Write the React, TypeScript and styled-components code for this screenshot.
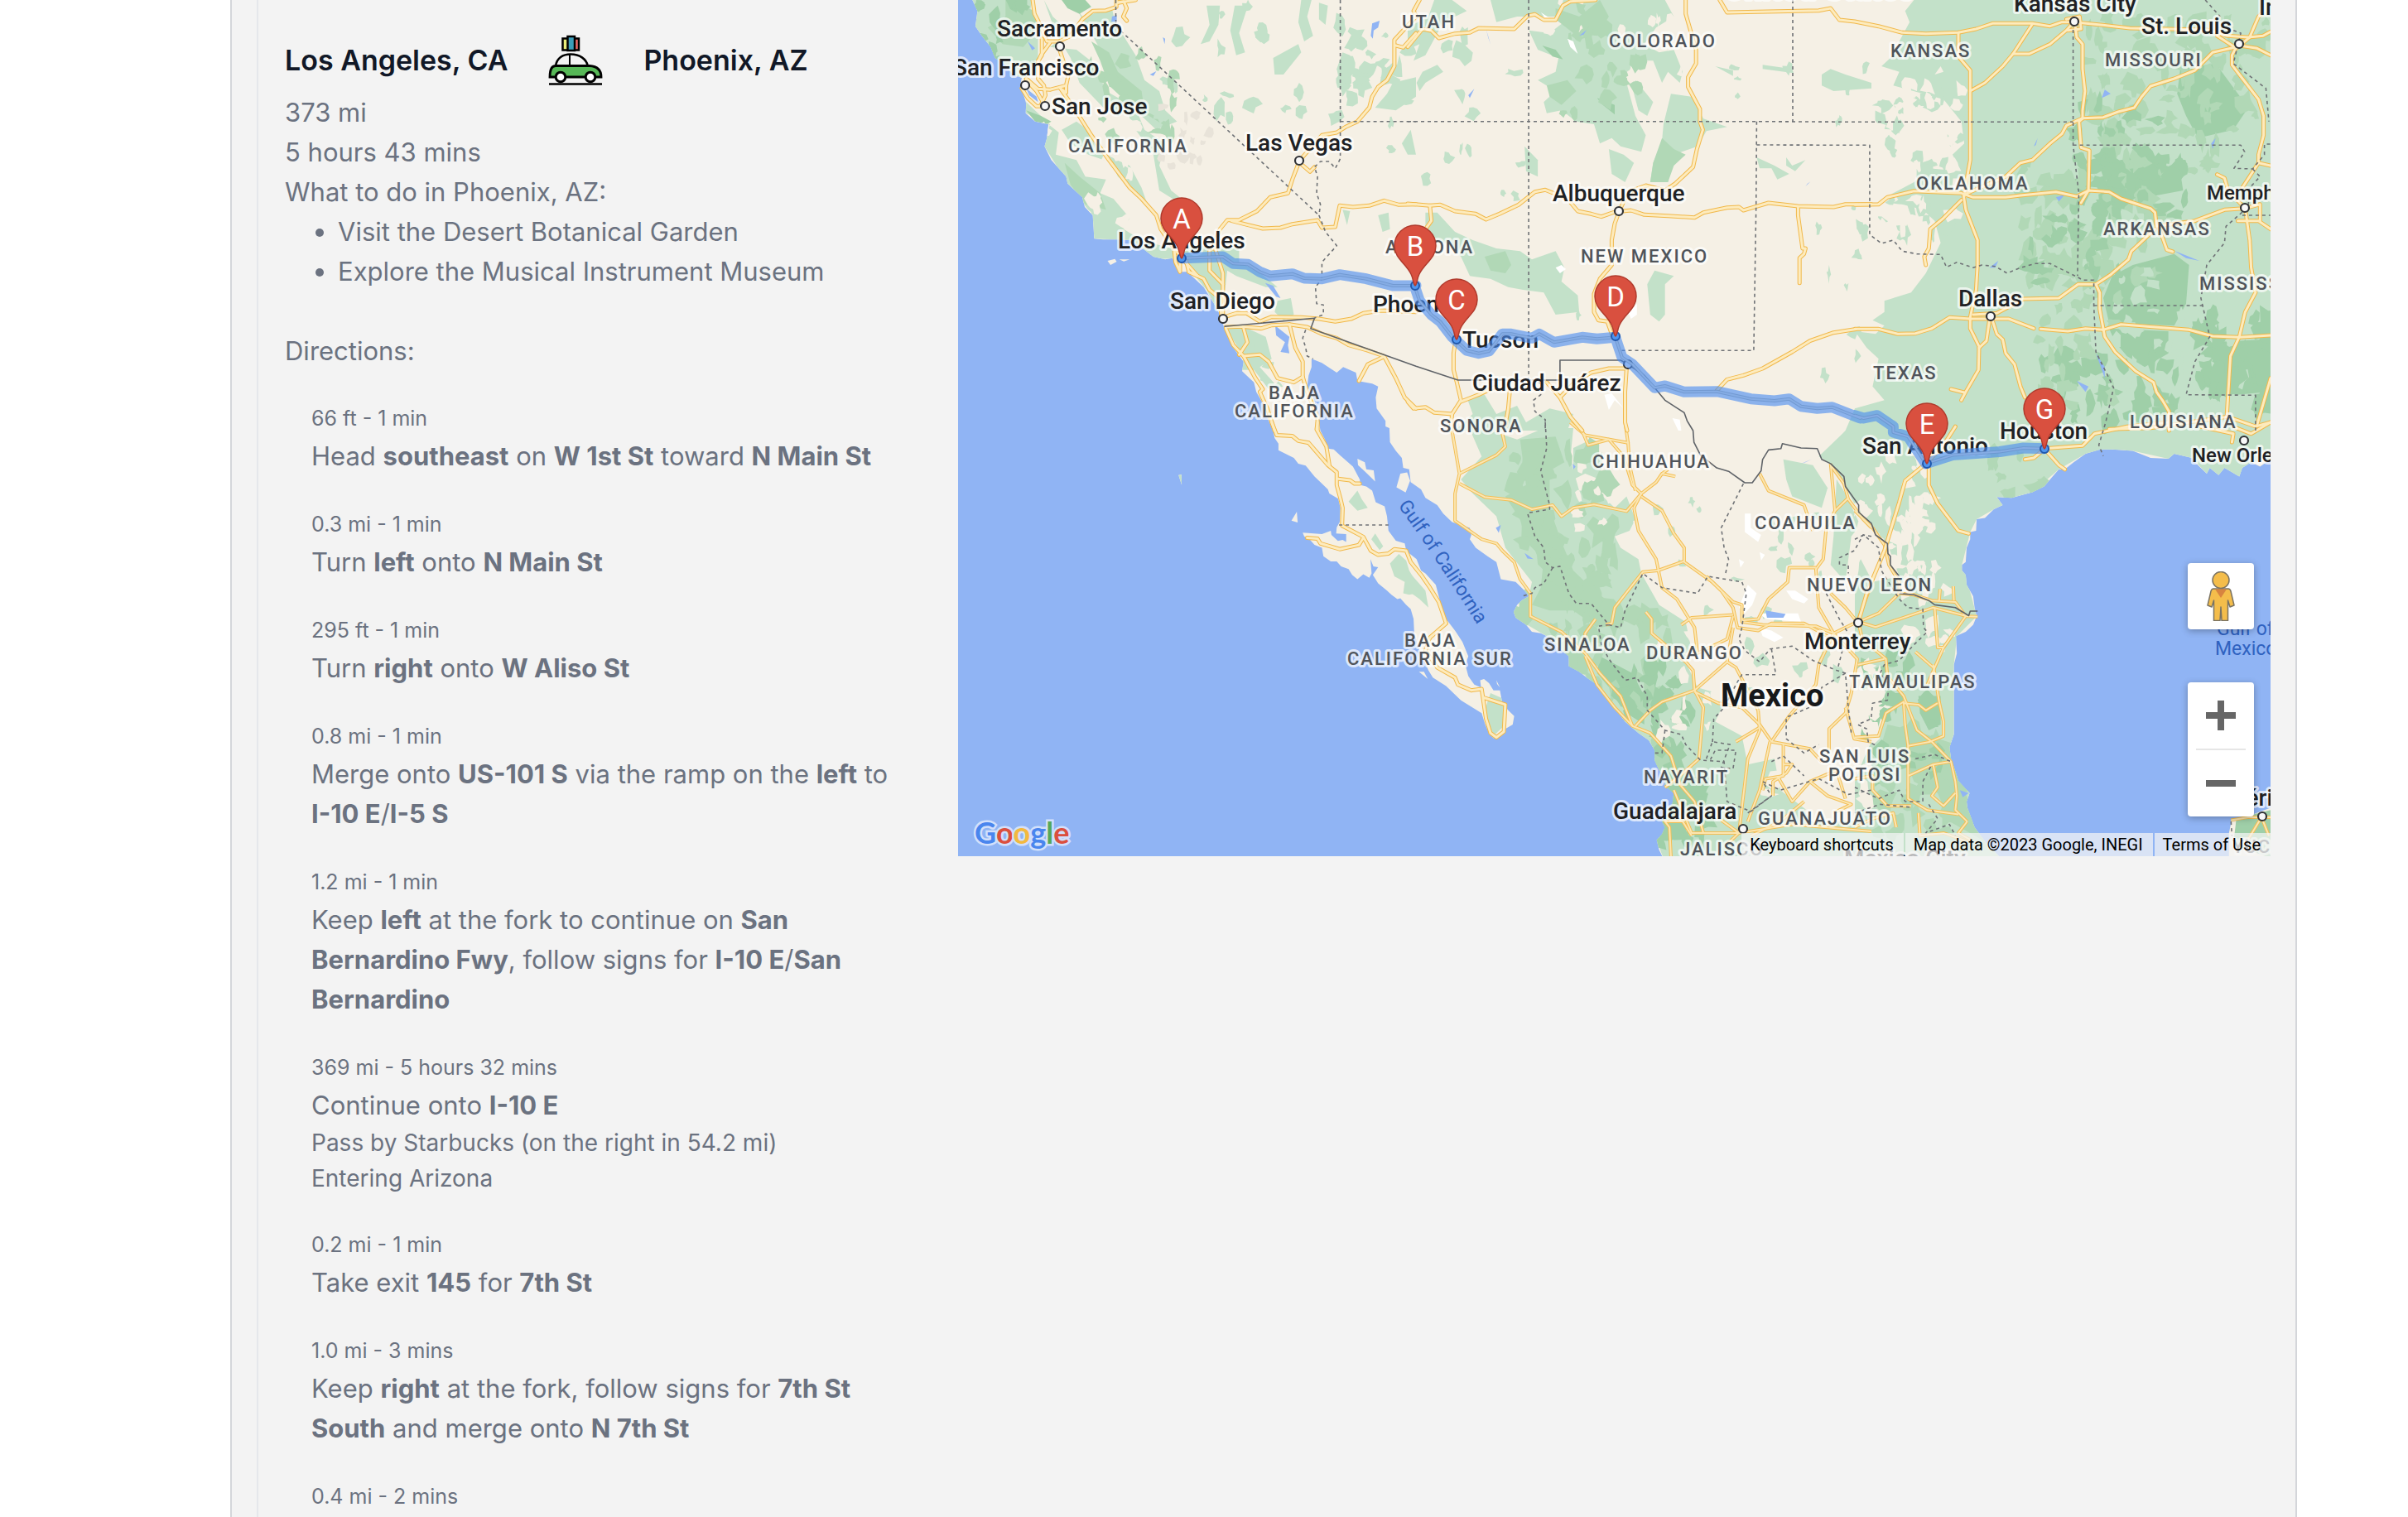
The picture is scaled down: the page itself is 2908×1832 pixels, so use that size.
import React from 'react';
import styled, { createGlobalStyle } from 'styled-components';

/* ---------- page styles ---------- */

const GlobalStyle = createGlobalStyle`
  *, *::before, *::after { box-sizing: border-box; }
  body {
    margin: 0;
    background: #ffffff;
    color: #6b7280;
    font-family: Inter, "Liberation Sans", sans-serif;
    font-size: 31px;
    line-height: 48px;
  }
  h2, p, ul, ol { margin: 0; padding: 0; }
`;

const Panel = styled.main`
  display: grid;
  grid-template-columns: minmax(0, 815fr) minmax(0, 1585fr);
  column-gap: 32px;
  align-items: start;
  min-height: 100vh;
  margin: 0 134px 0 278px;
  padding: 0 30px;
  border: solid #d4d6da;
  border-width: 0 2px;
  background: #f3f3f3;
`;

const Itinerary = styled.section`
  min-height: 100vh;
  padding: 34px 32px 0;
  border-left: 2px solid #e5e7eb;
`;

const LegHeader = styled.header`
  display: flex;
  align-items: center;
  gap: 48px;
  height: 78px;
`;

const City = styled.h2`
  color: #111827;
  font-size: 34px;
  font-weight: 600;
  line-height: 56px;
`;

const Activities = styled.ul`
  padding-left: 64px;
  margin-bottom: 48px;
`;

const Steps = styled.ol`
  display: flex;
  flex-direction: column;
  gap: 36px;
  padding: 35px 0 0 32px;
  list-style: none;
`;

const Meta = styled.p`
  font-size: 25px;
  line-height: 44px;
`;

const Note = styled.p`
  font-size: 28px;
  line-height: 43px;
`;

const MapFrame = styled.section`
  position: relative;
  overflow: hidden;
  background: #90b4f4;
  font-family: Roboto, "Liberation Sans", sans-serif;
`;

const MapDrawing = styled.svg`
  display: block;
  width: 100%;
  height: auto;
`;

const Controls = styled.div`
  position: absolute;
  right: 20px;
  bottom: 48px;
  display: flex;
  flex-direction: column;
  gap: 64px;
`;

const ControlCard = styled.div`
  display: flex;
  flex-direction: column;
  align-items: center;
  width: 80px;
  border-radius: 4px;
  background: #ffffff;
  box-shadow: 0 2px 8px rgba(0, 0, 0, 0.3);
`;

const ControlButton = styled.button`
  display: flex;
  align-items: center;
  justify-content: center;
  width: 80px;
  height: 80px;
  padding: 0;
  border: 0;
  background: transparent;
`;

const Divider = styled.div`
  width: 60px;
  height: 2px;
  background: #e6e6e6;
`;

const LogoLink = styled.a`
  position: absolute;
  left: 20px;
  bottom: 7px;
  font-family: Lato, sans-serif;
  font-size: 36px;
  font-weight: 700;
  line-height: 44px;
  text-decoration: none;
  paint-order: stroke;
  -webkit-text-stroke: 5px #d2e0fb;
`;

const Letter = styled.span<{ $color: string }>`
  color: ${(p) => p.$color};
`;

const Attribution = styled.footer`
  position: absolute;
  right: 0;
  bottom: 0;
  display: flex;
  gap: 2px;
  color: #000000;
  font-size: 20px;
  line-height: 28px;

  > * {
    padding: 0 12px 0 10px;
    border: 0;
    background: rgba(245, 245, 245, 0.72);
    color: inherit;
    font: inherit;
    text-decoration: none;
    white-space: nowrap;
  }
`;

/* ---------- directions ---------- */

type Step = { meta: string; text: React.ReactNode; notes?: string[] };

const steps: Step[] = [
  { meta: '66 ft - 1 min', text: <>Head <b>southeast</b> on <b>W 1st St</b> toward <b>N Main St</b></> },
  { meta: '0.3 mi - 1 min', text: <>Turn <b>left</b> onto <b>N Main St</b></> },
  { meta: '295 ft - 1 min', text: <>Turn <b>right</b> onto <b>W Aliso St</b></> },
  { meta: '0.8 mi - 1 min', text: <>Merge onto <b>US-101 S</b> via the ramp on the <b>left</b> to <b>I-10 E</b>/<b>I-5 S</b></> },
  { meta: '1.2 mi - 1 min', text: <>Keep <b>left</b> at the fork to continue on <b>San Bernardino Fwy</b>, follow signs for <b>I-10 E</b>/<b>San Bernardino</b></> },
  { meta: '369 mi - 5 hours 32 mins', text: <>Continue onto <b>I-10 E</b></>, notes: ['Pass by Starbucks (on the right in 54.2 mi)', 'Entering Arizona'] },
  { meta: '0.2 mi - 1 min', text: <>Take exit <b>145</b> for <b>7th St</b></> },
  { meta: '1.0 mi - 3 mins', text: <>Keep <b>right</b> at the fork, follow signs for <b>7th St South</b> and merge onto <b>N 7th St</b></> },
  { meta: '0.4 mi - 2 mins', text: null },
];

const CarIcon = () => (
  <svg width="68" height="62" viewBox="-1 0 68 62" fill="none" stroke="#000" strokeWidth="3" aria-hidden="true">
    <rect x="17.500" y="4.500" width="7" height="14" fill="#e9ee7a" strokeWidth="2.500" />
    <rect x="30" y="4.500" width="7" height="14" fill="#ee6a68" strokeWidth="2.500" />
    <rect x="23.500" y="2" width="8.500" height="17" fill="#3c9db8" strokeWidth="2.500" />
    <path d="M9 38C10 28 18 23.500 27 23.500C38 23.500 46 29 48 38Z" fill="#f3f3f3" strokeWidth="2.600" />
    <path d="M26 24V38" strokeWidth="2" />
    <path d="M2 51C2 43 4 37.500 9 37.500H50C59 38 64 42 64 51Z" fill="#57b857" strokeWidth="2.800" />
    <circle cx="15" cy="51" r="5.800" fill="#fff" />
    <circle cx="51" cy="51" r="5.800" fill="#fff" />
    <path d="M1 59.500H65" strokeWidth="2.400" />
  </svg>
);

/* ---------- map geometry ---------- */

// Every tile has its own origin and scale; traces are written in tile units.
type TileId = 'A' | 'B' | 'C' | 'D' | 'E' | 'F';
const tiles: Record<TileId, [number, number, number, number]> = {
  A: [1150, 0, 2.8, 3],
  B: [1700, 0, 2.8, 3],
  C: [2240, 0, 2.8, 3],
  D: [1150, 510, 2.8, 2.904],
  E: [1700, 510, 2.8, 2.904],
  F: [2240, 510, 2.8, 2.904],
};

// "A 10,20 30,40 B 0,5" becomes a list of world points.
const pts = (trace: string): string => {
  let tile = tiles.A;
  const out: string[] = [];
  trace.trim().split(/\s+/).forEach((t) => {
    if (t in tiles) {
      tile = tiles[t as TileId];
      return;
    }
    const [x, y] = t.split(',').map(Number);
    out.push(`${(tile[0] + x / tile[2]).toFixed(1)},${(tile[1] + y / tile[3]).toFixed(1)}`);
  });
  return out.join(' ');
};

const land = pts(`A 68,0 85,40 78,95 100,130 130,170 145,210 180,235 205,270 235,282 230,310 240,340 250,375 248,410 280,440 325,450 320,500 312,530 335,580 385,640 390,665 440,715 448,750 475,780 480,865 510,868 570,868 600,870 650,905 680,930 720,940 745,935 765,985 795,985 850,1040 885,1100 905,1140 920,1190 950,1260 985,1310 980,1345 1020,1385 1028,1420 1050,1460 1060,1500 1085,1560
 D 1090,55 1103,75 1103,98 1155,125 1170,145 1195,152 1225,190 1245,210 1270,235 1275,250 1305,268 1312,300 1310,350 1300,368 1298,390 1332,392 1332,420 1320,412 1304,416 1282,395 1280,380 1250,392 1185,387 1190,400 1210,412 1225,430 1250,440 1255,470 1280,488 1300,488 1315,505 1340,515 1352,535 1370,550 1390,533 1410,545 1418,530 1414,480 1424,505 1440,508 1422,535 1440,565 1470,590 1485,605 1505,620 1515,617 1535,640 1550,655 1560,690 1562,740
 E 40,800 70,870 85,895 130,925 180,975 250,1020 262,1060 275,1090 290,1108 320,1095 330,1075 355,1060 360,1030 340,1010 320,985 312,940 290,940 275,915 258,900 245,905 248,930 225,920 205,890 195,850 205,820 185,770 160,730 130,690 115,650 100,590 95,570 60,530 45,520 30,480 0,455
 D 1535,450 1530,425 1500,415 1475,380 1470,330 1462,295 1432,280 1420,240 1400,225 1380,220 1378,200 1355,155 1310,115 1290,95 1270,92 1260,60 1245,30 1240,0
 A 1235,1520 1225,1450 1200,1400 1205,1360 1215,1330 1215,1300 1250,1315 1300,1350 1322,1330 1365,1350 1370,1380 1420,1390 1440,1400 1432,1440 1435,1480 1465,1525 1465,1545
 D 1478,20 1480,70 1500,100 1520,125 1525,160 1545,165 1550,210
 E 45,235 60,265 100,290 120,320 150,350 210,370 215,395 210,410 230,440 270,470 300,490 315,550 365,560 395,590 410,610 385,625 370,640 358,665 365,685 400,710 420,735 450,740 470,750 510,790 545,820 545,855 580,875 605,895 640,920 670,955 700,1000 735,1050 780,1090 815,1115 835,1150 835,1185 850,1220 870,1245 870,1275 900,1300 895,1340 880,1360 860,1400 870,1420 860,1445 842,1465 850,1500 865,1530
 F 495,1530 440,1470 405,1420 380,1350 378,1330 388,1300 350,1258 345,1240 325,1180 320,1140 335,1095 335,850 345,810 342,750 375,735 400,710 412,680 405,650 400,610 378,570 375,535 362,520 362,500 375,490 378,440 390,410 390,385 410,380 412,340 440,335 470,305 500,290 480,262 530,265 600,245 640,225 665,195 690,165 710,165 740,140 780,110 830,95 870,95 940,100 1000,125 1060,128 1080,110 1140,125 1160,150 1190,180 1200,160 1230,185 1250,160 1300,190 1310,160 1340,140 1370,155 1406,130 C 1412,0`);

const islands = [
  'F 1265,1530 1265,1440 1275,1390 1320,1385 1410,1350 1410,1530',
  'D 1370,128 1395,140 1400,165 1425,168 1430,208 1395,172 1372,150',
  'D 1515,180 1538,176 1548,205 1533,246 1502,228',
  'D 1147,345 1165,314 1168,351',
  'D 765,185 775,183 776,220',
  'A 525,945 550,938 556,948 535,960',
  'A 565,940 600,940 580,947',
  'E 38,875 55,875 68,900',
  'E 300,905 312,930 302,918',
].map(pts);

const G1 = '#c3e1c9';
const G2 = '#b1d8b6';
const G3 = '#9fcfa8';
const SAND = '#f5f0e5';
const STONE = '#e8e3d9';
const WATER = '#90b4f4';

const areas: [string, string][] = [
  [G1, 'A 68,0 85,40 78,95 100,130 145,210 205,270 235,282 290,260 290,130 260,60 270,0'],
  [G1, 'A 310,0 340,60 400,120 330,170 420,180 480,230 520,330 620,390 650,470 720,520 700,600 740,690 775,720 745,720 700,690 680,560 640,500 600,440 520,400 430,300 400,210 350,120'],
  [G1, 'A 400,0 440,60 540,30 550,80 620,200 650,290 700,330 720,400 760,440 690,470 620,400 560,310 500,180 470,120'],
  [G1, 'A 240,360 300,420 325,450 360,480 350,560 420,580 450,640 520,650 500,700 545,720 600,790 580,830 640,870 740,900 760,935 680,940 600,870 480,865 475,780 390,665 312,530 330,450 250,410'],
  [G1, 'A 370,470 420,440 470,480 520,560 600,600 640,680 660,740 620,690 560,640 540,590 460,560 400,520'],
  [G1, 'A 780,890 900,890 970,900 970,950 1030,980 1100,1040 1060,1040 960,1000 930,980 920,1070 900,1130 860,1050 790,960'],
  [G1, 'A 1100,1090 1145,1080 1155,1140 1120,1160 1090,1130'],
  [G1, 'A 925,1190 1000,1190 1060,1220 1080,1300 1040,1330 1090,1390 1070,1410 1020,1340 980,1340 985,1290'],
  [G1, 'A 860,20 905,20 900,90 870,150 840,160 870,90'],
  [G1, 'A 1085,210 1170,160 1180,190 1120,270 1090,270'],
  [G1, 'A 955,20 1000,20 970,120 990,190 960,200 940,110'],
  [G1, 'A 1320,190 1345,200 1350,300 1320,350 1300,250'],
  [G1, 'A 1470,340 1490,300 1568,280 1568,350 1500,400 1430,390'],
  [G1, 'A 1520,520 1550,470 1568,560 1540,560'],
  [G1, 'A 1180,0 1215,0 1200,60 1220,130 1190,150 1170,80'],
  [G1, 'A 1240,10 1270,20 1262,90 1240,70'],
  [G1, 'A 1440,780 1475,770 1480,830 1455,840'],
  [G1, 'A 1320,760 1345,765 1335,815'],
  [G2, 'A 380,590 430,640 500,700 520,760 450,740 400,670'],
  [G1, 'B 90,0 150,0 200,40 120,80 60,200 20,220 40,160 0,180 0,100 70,60'],
  [G1, 'B 30,300 50,260 100,235 120,260 60,300 40,330'],
  [G1, 'B 280,0 560,0 720,0 870,0 900,60 840,100 800,160 850,190 900,180 930,260 920,300 880,260 860,300 830,220 770,220 740,300 770,420 805,490 790,550 720,530 690,500 650,520 630,450 570,440 520,400 470,410 460,370 500,330 440,290 500,260 510,210 440,180 410,110 480,120 540,70 500,60 370,60 300,80'],
  [G1, 'B 770,290 830,370 810,420 780,400 765,340'],
  [G1, 'B 890,340 960,350 1000,430 1080,460 1010,475 980,530 900,560 880,660 820,660 830,590 860,510 865,450'],
  [G1, 'B 680,540 730,560 765,590 735,660 690,630'],
  [G1, 'B 395,530 440,580 440,640 400,620'],
  [G1, 'B 60,770 100,770 160,840 220,870 300,900 380,910 420,940 500,910 530,970 520,1020 575,1070 580,1130 500,1140 460,1060 390,1050 340,1040 280,1010 210,1000 180,930 130,880 60,870'],
  [G1, 'B 810,1030 835,980 900,1000 870,1030 870,1140 850,1165 820,1140'],
  [G1, 'B 200,1440 260,1430 300,1500 370,1470 400,1530 480,1480 560,1500 540,1560 160,1560 220,1500'],
  [G1, 'B 1400,270 1430,250 1480,270 1568,300 1568,320 1440,330 1400,310'],
  [G1, 'B 1040,240 1100,255 1100,275'],
  [G1, 'B 1200,235 1300,250 1305,265 1200,250'],
  [G1, 'B 1180,570 1240,600 1290,630 1250,650 1230,610 1190,610'],
  [G1, 'B 1280,570 1300,600 1345,580 1310,620 1280,600'],
  [G1, 'C 200,0 170,40 185,80 150,150 130,200 90,240 150,260 130,310 300,360 360,440 370,520 330,560 360,620 250,610 200,660 130,700 160,740 230,760 270,800 290,880 240,990 190,1060 100,1090 100,1130 60,1160 100,1180 70,1210 0,1200 40,1260 80,1300 60,1400 100,1450 0,1480 B 1480,1560 E 1470,40 1390,120 1430,145 1480,225 1525,315 F 60,370 110,425 150,540 60,560 20,480 0,520 0,900 30,940 80,900 120,1000 60,1110 30,1180 0,1260 0,1530 495,1530 440,1470 405,1420 380,1350 388,1300 325,1180 320,1140 335,1095 335,850 345,750 412,680 375,535 362,500 390,385 412,340 470,305 500,290 480,262 530,265 600,245 690,165 780,110 870,95 940,100 1060,128 1140,125 1190,180 1300,190 1340,140 1406,130 C 1412,0'],
  [G1, 'E 200,0 370,60 460,20 560,20 550,130 580,240 640,240 700,300 740,260 770,340 750,380 700,400 720,440 780,480 790,530 850,640 940,700 960,800 940,840 980,930 1080,960 1040,1050 1130,1100 1150,1200 1240,1180 1260,1290 1400,1400 1568,1400 1568,1530 865,1530 842,1465 900,1300 835,1150 735,1050 605,895 545,820 470,750 370,690 358,665 410,610 420,560 330,440 300,330 220,250 180,200 250,120'],
  [G1, 'E 560,90 620,60 660,120 650,200 600,180 560,200'],
  [G1, 'E 1270,130 1370,150 1420,230 1400,300 1300,260 1280,200'],
  [G1, 'E 1450,200 1480,250 1530,360 1500,400 1480,560 1430,500 1440,400'],
  [G1, 'E 280,950 325,970 330,1060 290,1100 260,1010'],
  [G1, 'E 0,520 60,590 70,650 40,620 0,590'],
  [G1, 'D 1370,240 1385,270 1405,300 1370,310 1340,278'],
  [G1, 'D 1430,390 1457,435 1445,448 1417,410'],
  [G1, 'D 1480,495 1510,462 1535,485 1545,520 1568,560 1568,600 1545,605 1525,600 1530,560 1495,540'],
  [G1, 'D 765,185 775,183 776,220'],
  [G2, 'A 180,0 280,40 290,110 240,170 170,160 120,100 180,60'],
  [G2, 'A 470,150 530,190 560,260 640,330 650,400 720,440 740,470 680,430 590,370 530,310 500,220'],
  [G3, 'A 370,0 450,0 470,25 430,50 390,30'],
  [G3, 'A 250,400 300,420 335,440 320,450 280,440'],
  [G2, 'B 500,30 580,60 650,0 680,60 640,130 560,120 500,70'],
  [G2, 'B 470,310 540,290 570,330 520,380 480,350'],
  [G3, 'B 455,165 500,180 525,215 490,205'],
  [G3, 'B 640,355 700,380 700,415 660,380'],
  [G2, 'B 260,930 330,910 350,960 330,990 280,980'],
  [G2, 'B 860,500 900,540 940,560 900,600 880,660 820,660 830,590'],
  [G2, 'E 380,60 500,50 530,140 480,170 480,300 520,420 560,520 640,600 700,640 640,720 560,660 480,660 420,640 450,580 460,480 400,420 380,340 330,260 400,220'],
  [G3, 'C 1100,250 1220,230 1330,390 1280,470 1160,500 1120,420 1090,340'],
  [G3, 'C 870,590 960,560 1100,620 1110,690 960,720 840,690'],
  [G3, 'C 870,1000 940,960 1080,920 1130,960 1120,1100 1080,1180 860,1170 840,1080'],
  [G3, 'C 860,1190 1060,1200 1060,1280 980,1330 920,1290 880,1240'],
  [G3, 'C 1210,1240 1380,1230 1400,1420 1290,1430 1180,1400 1160,1290'],
  [G3, 'E 650,820 760,880 800,960 800,1060 740,1020 690,940 640,880'],
  [G3, 'E 820,1060 900,1110 960,1280 1000,1400 920,1300 860,1200'],
  [G3, 'F 215,960 290,960 290,1060 250,1080 220,1020'],
  [G2, 'F 340,1130 330,1190 390,1340 440,1470 320,1400 280,1300 200,1260 160,1150 90,1130 110,1060 200,1080'],
  [G3, 'F 1290,1390 1406,1360 1410,1530 1280,1480'],
  [SAND, 'C 270,270 290,240 300,260'],
];

// Deterministic generator so that the terrain is the same on every render.
const random = (seed: number) => () => {
  seed = (seed * 16807) % 2147483647;
  return seed / 2147483647;
};

// [fill, left, top, width, height, count, size]
type Scatter = [string, number, number, number, number, number, number];
const scatters: Scatter[] = [
  [G1, 1390, 0, 310, 150, 30, 8],
  [STONE, 1400, 130, 60, 90, 12, 6],
  [G1, 1600, 0, 240, 150, 20, 9],
  [G1, 1660, 170, 200, 90, 8, 6],
  [SAND, 1250, 110, 130, 170, 28, 8],
  [G3, 1180, 0, 80, 80, 14, 9],
  [G2, 1310, 60, 110, 110, 16, 8],
  [SAND, 1870, 0, 180, 110, 18, 6],
  [G2, 1870, 10, 110, 130, 18, 8],
  [G1, 2080, 80, 180, 70, 8, 5],
  [G1, 2180, 230, 90, 260, 10, 6],
  [G1, 1900, 340, 80, 60, 3, 4],
  [G1, 2270, 90, 110, 200, 46, 8],
  [SAND, 2270, 100, 100, 180, 30, 8],
  [G2, 2520, 20, 220, 190, 90, 10],
  [G3, 2500, 110, 110, 150, 34, 9],
  [G2, 2440, 190, 170, 150, 60, 11],
  [G3, 2530, 190, 110, 80, 26, 11],
  [G3, 2440, 260, 120, 80, 22, 9],
  [G1, 2540, 330, 190, 160, 36, 8],
  [G3, 2460, 430, 170, 80, 40, 11],
  [G2, 2460, 330, 100, 160, 30, 9],
  [G3, 2650, 380, 92, 120, 30, 14],
  [SAND, 2240, 540, 90, 150, 34, 8],
  [SAND, 2280, 600, 60, 90, 14, 9],
  [G2, 2400, 540, 70, 60, 10, 8],
  [G2, 1830, 540, 120, 220, 50, 12],
  [G2, 1890, 740, 130, 200, 50, 12],
  [G3, 1930, 800, 110, 190, 34, 10],
  [SAND, 1890, 540, 110, 110, 20, 7],
  [G1, 2090, 620, 150, 220, 22, 7],
  [G1, 2000, 600, 110, 160, 6, 6],
  [SAND, 2000, 740, 90, 150, 18, 8],
  [SAND, 2120, 870, 140, 120, 26, 10],
  [G3, 2250, 790, 90, 150, 26, 10],
  [SAND, 2240, 800, 30, 90, 14, 9],
  [SAND, 2300, 680, 60, 110, 16, 8],
  [G2, 2260, 880, 120, 140, 30, 11],
  [G3, 1990, 930, 80, 90, 22, 11],
  [G1, 1500, 420, 60, 80, 6, 6],
];

const blobs = scatters.flatMap(([fill, x, y, w, h, count, size], i) => {
  const r = random(7919 + i * 104729);
  return Array.from({ length: count }, () => {
    const cx = x + r() * w;
    const cy = y + r() * h;
    const rx = size * (0.4 + r());
    const ry = size * (0.5 + r() * 1.2);
    const points = Array.from({ length: 9 }, (_, k) => {
      const a = (k / 9) * Math.PI * 2;
      const j = 0.4 + r() * 0.9;
      return `${(cx + Math.cos(a) * rx * j).toFixed(1)},${(cy + Math.sin(a) * ry * j).toFixed(1)}`;
    }).join(' ');
    return { fill, points };
  });
});

const lakes = [
  'A 1420,85 1445,75 1440,100 1425,110 1422,140 1415,130',
  'A 250,320 285,350 290,370 260,345',
  'A 668,270 690,258 680,275',
  'A 1058,1025 1085,1035 1110,1080 1095,1075',
  'A 1092,1180 1140,1220 1135,1250 1140,1280 1110,1275 1125,1240 1095,1215',
  'A 712,135 720,140 718,160',
  'A 540,60 556,55 556,80 538,78',
  'A 255,150 280,175 270,182',
  'B 205,345 225,322 210,355',
  'B 265,105 280,160 272,135',
  'B 1345,675 1362,658 1352,665',
  'B 580,130 605,108 595,125',
  'C 835,355 845,325 865,340',
  'C 605,530 618,500 612,525',
  'C 750,1380 790,1400 780,1420',
  'C 815,1280 845,1330 845,1370 832,1330',
  'C 1080,908 1165,945 1120,935',
  'C 455,970 485,945 475,970',
  'C 680,715 710,705 690,730',
  'C 1205,520 1220,500 1210,540',
  'E 1210,660 1278,672 1270,685 1215,685',
  'E 298,370 315,360 308,388',
  'E 395,458 425,480 405,478',
  'E 558,145 568,155 560,165',
  'E 1330,145 1365,130 1345,140',
  'F 355,1290 385,1300 365,1315',
  'F 400,430 440,370 500,312 440,340 412,390',
  'F 365,800 375,760 400,735 380,760',
].map(pts);

const saltFlats = [
  'B 500,970 520,960 535,975 515,990',
  'B 665,1430 690,1425 730,1480 700,1450 680,1485',
  'B 745,1130 775,1100 775,1140 755,1155',
  'B 540,140 560,150 575,195 550,170',
  'B 450,45 480,65 465,65',
  'B 895,1515 920,1520 925,1560 915,1560',
  'E 1140,320 1160,320 1160,370 1195,395 1185,420 1140,385',
  'E 1150,570 1180,600 1165,640 1140,670 1120,650',
  'E 1280,590 1310,590 1355,620 1340,635 1300,620',
  'E 1190,720 1230,730 1270,755 1240,770 1200,750',
  'E 1190,670 1320,670 1330,700 1210,690',
  'E 1120,480 1138,490 1125,510',
  'E 1190,455 1208,465 1195,485',
].map(pts);

const roads = [
  'A 272,0 278,50 290,75 320,150 360,150 400,130 440,70 475,40 520,38 555,25 555,0',
  'A 303,140 303,200 290,220 290,285 310,310 315,345 300,380',
  'A 330,155 300,200 290,225',
  'A 360,170 375,220 392,275 385,310 330,325 290,322 250,285',
  'A 385,310 385,335 365,320 420,405 470,490 530,580 600,680 640,720 690,780 705,830 730,870 750,900 778,935',
  'A 235,320 255,355 285,385 312,385',
  'A 250,290 285,330 312,380',
  'A 555,10 580,5 590,30 578,60 590,75',
  'A 560,10 620,0',
  'A 880,900 905,830 930,797 970,797 1030,765 1075,715 1135,700 1150,650 1168,600 1172,585 1200,550 1250,490 1300,480 1330,460 1370,440 1410,390 1420,350 1440,315 1470,290 1495,240 1495,145 1568,60',
  'A 1500,165 1525,172 1568,120',
  'A 945,800 1000,815 1050,828 1110,825 1150,812 1235,798 1250,825 1295,822 1310,745 1355,750 1410,745 1460,727 1510,742 1568,740',
  'A 1175,590 1210,622 1225,605',
  'A 790,940 800,985 850,1010 870,1050 905,1080 910,1150',
  'A 780,940 830,1000 800,985',
  'A 870,910 870,980 915,1030 915,1140',
  'A 890,905 915,990 915,1030',
  'A 750,900 755,950 770,985 770,930',
  'A 915,1150 960,1135 995,1135 1040,1165 1080,1148 1180,1150 1240,1155 1295,1165 1350,1155 1390,1135 1450,1125 1568,1130',
  'A 925,1185 980,1183 1045,1190 1080,1178 1140,1175 1200,1185 1250,1210 1300,1225 1340,1250 1400,1268 1460,1290 1500,1370 1530,1440 1568,1480',
  'A 1460,1292 1405,1320 1375,1380',
  'A 1140,1175 1160,1260 1185,1310 1185,1365 1155,1385 1100,1370 1070,1310 1040,1285 985,1290',
  'A 1185,1365 1200,1420 1235,1510 1235,1560',
  'A 925,1190 950,1250 985,1290 1000,1320 1025,1370 1050,1410 1040,1420 1065,1480 1090,1560',
  'A 985,1190 998,1240 970,1285',
  'D 1080,0 1097,45 1150,48 1170,65 1205,72 1270,150 1300,175 1300,220 1312,265 1320,300 1318,362 1390,402 1415,450 1440,465 1475,460 1495,445 1535,450 1550,490 E 45,535 75,580 105,630 130,705 75,755 60,800 100,860 160,895 170,920 215,940 250,935 265,1040 280,1090 300,1105 325,1085 330,990 255,965',
  'D 1235,0 1232,25 1265,85 1275,150',
  'D 1305,198 1345,203 1360,215 1378,215',
  'D 1200,405 1235,408 1245,425 1310,445 1375,430 1390,405',
  'B 40,0 20,40 30,60',
  'B 0,170 50,105 80,112 105,138 160,122 210,118 240,102 360,105 405,58 430,52 460,72 500,72 525,20 550,5 635,0',
  'B 940,0 940,50 975,180 975,230 948,280 948,315 988,395 988,440 998,470 978,540 965,605 905,665 870,690 805,672 760,690 735,720 715,765 700,810 690,870 690,960 650,1010 630,1065 630,1130 645,1160 675,1165 690,1210 702,1225',
  'B 0,738 75,745 110,742 160,765 230,775 265,795 310,775 375,742 430,695 465,688 540,720 575,765 620,775 655,785 700,768 755,762 800,778 880,782 970,788 1000,770 1080,752 1120,750 1135,762 1220,735 1320,747 1440,750 1480,740 1568,740',
  'B 1320,750 1320,780 1335,900 1345,900 1340,920 1325,935 1325,1025',
  'B 75,745 80,800 60,830',
  'B 1055,0 1080,45 1390,38 1430,30 1460,72 C 0,78 80,95 160,118 240,122 350,118 410,105 465,85 600,85 660,95 700,80 740,80 850,92 930,102 1190,108 1260,130 1330,135 1380,130 1406,115',
  'B 1045,1415 1080,1375 1135,1360 1200,1335 1300,1275 1360,1235 1440,1205 1520,1192 C 0,1192 80,1192 145,1210 205,1208 260,1190 320,1150 390,1155 520,1155 605,1190',
  'B 162,1235 155,1280 155,1340 165,1380 180,1450 150,1500 145,1560',
  'B 0,1455 20,1480 60,1475 90,1495 150,1500',
  'B 180,1455 240,1430 300,1400',
  'B 345,1420 340,1480 330,1540',
  'B 470,1385 515,1440 550,1510 590,1560',
  'B 515,1440 560,1390 620,1350 680,1335 740,1335 735,1420 735,1530 742,1560',
  'C 350,118 350,205 390,255 390,330 390,580 380,640 370,710',
  'C 600,88 535,195 500,240 440,300 390,330',
  'C 535,195 590,195 660,160 715,110 740,80',
  'C 715,70 760,60 765,105 720,110',
  'C 745,90 750,135 770,160 770,250 778,330 770,400 770,430 758,440 765,535 793,545 790,690 765,735',
  'C 370,705 510,640 560,590 600,580 660,520 700,485 715,455 770,428 840,425 890,405 945,390 970,350 1000,312 1080,285 1150,255 1210,190 1290,170',
  'C 0,742 80,740 110,715 200,692 360,700 400,715 510,715 560,708 680,695 750,712 790,690 860,695 900,720 1000,755 1015,770 1020,820 1150,800 1250,760 1315,755',
  'C 1015,830 935,910 925,940 865,995 815,1030 755,1030 690,1080 570,1083 480,1135 400,1140',
  'C 1030,830 1055,905 1075,912',
  'C 815,1030 828,1060 828,1120 845,1220 880,1275 950,1345 1010,1385 1020,1420 1040,1450 1062,1490 1062,1560',
  'C 628,1192 720,1200 780,1190 840,1195 900,1175 1130,1195 1210,1218 1300,1222 1406,1215',
  'C 368,710 375,760 415,870 415,960 410,1050 390,1150 390,1190 420,1255 418,1340 375,1420 360,1450',
  'C 420,1260 445,1235 455,1160',
  'C 465,1160 480,1210 500,1230 510,1280 540,1320 560,1400 575,1440',
  'C 360,725 300,790 255,830 250,900 235,930 240,960',
  'C 325,1410 370,1422',
  'C 1290,170 1275,200 1275,235 1300,270 1365,360 1382,420 1382,490 1365,560 1365,590 1310,680',
  'C 1300,165 1360,175 1406,200',
  'C 1335,135 1365,60 1375,50',
  'C 1225,130 1290,175 1335,135',
  'C 1365,590 1406,600',
  'C 1225,632 1250,645 1262,690 1315,750',
  'C 1320,755 1335,870 1340,970 1355,1060 1320,1130 1300,1220 1270,1290 1258,1500',
  'C 1295,800 1365,800 1406,830',
  'C 1320,755 1370,740 1370,800',
  'C 860,1555 1000,1550 1260,1510 1355,1545 1406,1530',
  'C 1360,1540 1406,1370',
  'F 240,145 170,205 150,280 100,450 40,600 12,700',
  'F 250,150 250,220 280,285 350,380 385,390',
  'F 640,92 770,82 810,40 920,15 1060,0',
  'F 640,92 690,150 710,165',
  'F 640,95 605,125 575,130',
  'F 340,15 300,80 245,140',
  'F 1170,15 1280,40 1275,70',
  'F 1406,0 1340,40 1290,20',
];

const minorRoads = [
  'F 12,700 80,670 150,600 200,605 260,625 340,630 375,680 300,790 270,860 245,920',
  'F 12,700 70,718 150,690 265,650 380,680 415,682',
  'F 270,650 280,790 300,790',
  'F 288,585 285,625',
  'F 333,575 335,625',
  'F 265,850 285,980 300,1050 300,1100 255,1120 180,1135 170,1060 165,980 105,1020 80,1100 0,1105',
  'F 12,700 25,760 105,830 110,890 165,960 180,1000 210,1080 260,1120 325,1190 340,1260 345,1310 340,1360 380,1400',
  'F 165,985 215,990 240,1010 280,985',
  'F 180,1135 180,1320 245,1360 350,1375',
  'F 180,1240 265,1200 325,1190',
  'F 265,1200 280,1280 260,1310 300,1345 340,1300',
  'F 0,1250 60,1240 60,1290 110,1345 190,1345',
  'F 0,1420 60,1390 130,1370 140,1420',
  'F 380,1400 350,1440 400,1470',
  'F 205,805 265,860',
  'F 10,850 100,830',
  'F 0,310 60,370 100,430 115,500 150,560 150,600',
  'F 215,1370 220,1450 300,1440 380,1470',
  'F 1272,1395 1330,1385 1406,1385',
  'F 1320,1480 1375,1385 1400,1450',
  'E 145,0 175,180 160,250 160,345 250,410 300,425 320,450 360,490 380,550 415,600 415,680 520,735 600,810 650,880 720,960 760,1065 820,1090 890,1170 920,1270 970,1330 1000,1440',
  'E 600,820 640,920 700,1000 760,1065',
  'E 175,180 300,115 330,85 320,40',
  'E 175,215 260,262 350,272 420,305 490,290 520,330 560,300 630,288 740,312 790,250',
  'E 550,0 600,45 745,72 735,0',
  'E 590,30 610,80 680,60 730,120 760,220 790,250 840,210 860,180 905,190',
  'E 745,70 750,150 770,240',
  'E 860,180 880,165',
  'E 765,300 780,380 840,480 860,580 910,620 970,720 980,810 1080,760 1100,680',
  'E 790,250 765,300',
  'E 790,260 860,310 900,390 935,440 935,490 1030,560 1100,630 1130,640 1130,700 1200,710 1380,715 1440,740 1520,700',
  'E 1010,540 1060,590 1100,650 1115,720 1185,730 1230,705 1340,705 1420,750',
  'E 935,487 845,520 795,525 745,590 700,650 690,705 670,710',
  'E 635,690 600,740 600,760',
  'E 805,665 825,690 825,740 940,840 965,870 970,940 860,980 820,1010 770,1065',
  'E 970,940 1080,840 1100,720',
  'E 970,940 1000,1000 985,1180 920,1240 870,1280',
  'E 970,945 1050,985 1130,1000 1190,1060 1230,1120 1360,1145 1400,1190',
  'E 1185,1010 1190,1080 1150,1180 1120,1440',
  'E 1230,1120 1290,1030 1380,920 1390,850 1440,740',
  'E 1080,840 1110,860 1150,940 1185,1010',
  'E 1225,1120 1190,1290 1150,1400',
  'E 1190,180 1220,240 1340,290 1370,380',
  'E 1430,145 1445,310 1415,370 1405,480 1380,515 1390,650 1440,740',
  'E 1380,510 1290,510 1285,560 1220,620 1185,690 1130,695',
  'E 1445,310 1490,265',
  'E 1430,150 1475,215 1490,270 1540,340 1568,370',
  'E 925,710 960,685 1100,675',
  'E 1110,1120 1190,1070',
  'E 1430,600 1480,650 1520,700 1560,590',
  'E 1440,740 1520,830 1500,950 1480,1020 1425,1075 1425,1150',
  'E 1480,1000 1510,1110 1568,1120',
  'E 900,1290 960,1440 1120,1440 1300,1410 1568,1435',
  'E 1250,1240 1300,1330 1360,1260 1420,1310 1500,1340 1440,1370',
  'E 1270,1130 1270,1240 1210,1250 1200,1290',
  'E 1270,1200 1300,1200 1280,1230 1235,1260 1235,1310',
  'E 1360,1260 1450,1220 1480,1320',
  'E 1340,1330 1260,1400 1160,1450',
  'E 1060,1395 1120,1440 1080,1480',
  'E 890,1522 885,1420 870,1400 930,1400 960,1450',
];

const stateLines = [
  'A 553,0 553,95 1240,780',
  'A 1312,0 1312,440 1312,575 1295,610 1275,585 1245,585 1225,605 1235,640 1232,700 1245,740 1240,780 1262,840 1300,890 1250,950 1250,1010 1228,1040 1232,1100 1255,1105 1255,1140 1225,1152',
  'A 1312,440 1568,440',
  'A 1195,1195 1185,1225 1195,1260 1200,1290 1220,1300',
  'B 0,440 1178,440 C 0,442 738,442',
  'B 409,0 409,1375',
  'B 1302,0 1302,440',
  'B 1180,440 1178,750 1170,1270 720,1270',
  'B 1180,525 C 0,526 50,526 50,850 90,882 130,870 160,910 210,920 290,922 310,968 345,950 400,970 430,960 475,965 515,990 560,970 610,955 660,955 755,1005 770,1015 808,1015 808,1107 815,1275 850,1350 875,1405 848,1530 F 825,80 840,118',
  'B 445,1380 450,1430 425,1450 430,1490 465,1520 465,1560',
  'C 738,60 738,526 757,700 753,1000',
  'C 738,526 1305,526 1318,550 1282,610 1345,612 1385,560 1385,522 1406,522',
  'C 808,1107 1180,1107',
  'C 1280,110 1305,120 1280,230 1390,320 1400,440',
  'C 1345,612 1370,640 1335,680 1330,750 1255,820 1250,880 1190,960 1170,1080 1200,1220 1150,1310 1120,1430 1355,1432 1355,1560',
  'C 1185,0 1235,60',
  'C 1310,780 1406,780',
  'D 1308,360 1475,360',
  'E 465,0 470,90 450,170 480,290 480,305 405,318 430,400 460,440 465,490 490,510 515,505 545,600 570,635 620,635 680,710 720,720 735,660 795,530 860,580 980,600 1015,540 1130,560 1145,600 1130,720',
  'E 490,510 460,565 430,580 420,600 385,610',
  'E 680,710 645,715 655,780 680,830 735,905 775,895 810,960 810,1010 870,1080 925,1095 940,1130 990,1185 1070,1190 1080,1330 1160,1365 1230,1310',
  'E 870,1080 860,1160 830,1160',
  'E 1010,1180 1030,1120 1090,1130 1060,1210 1100,1215 1110,1150 1040,1150 1020,1190',
  'E 1135,215 1060,370 1070,440 1085,480 1075,530',
  'E 1130,720 1120,760 1140,800 1190,840 1225,795 1300,785 1370,835 1450,870 1480,880 1490,1000 1500,1090',
  'E 1230,795 1245,885 1130,885 1110,920 1070,1000 1035,1040 1030,1130',
  'E 1480,880 1400,930 1380,990 1280,1035 1280,1110 1340,1160 1390,1130',
  'E 1415,600 1460,690 1490,740',
  'E 1470,800 1455,860',
  'E 1568,400 1540,395 1510,450 1460,475 1460,500 1490,500 1490,530',
  'E 1150,1370 1230,1310 1200,1260 1260,1290 1390,1250 1490,1305 1568,1290',
  'E 1230,1190 1270,1170 1340,1240',
  'F 0,410 30,395 80,440 90,520 150,620 180,650 230,655 232,720 245,735 200,780 150,835 100,850 85,880 115,920 110,975 60,985 55,1040 10,1060 40,1075 45,1120 75,1135',
  'F 205,1180 270,1165 325,1190',
  'F 0,1280 80,1320 150,1290 170,1330 230,1330 230,1260 260,1200',
  'F 0,1370 85,1340 190,1350',
  'F 250,1340 280,1390 240,1440 320,1410 340,1450',
  'F 1272,1400 1275,1450',
];

const countryLines = [
  'A 920,1183 1225,1153 1212,1190 1568,1327 B 170,1377 515,1377 515,1305 720,1305 745,1320 800,1360 870,1450 935,1495 945,1525 965,1560 E 968,70 990,115 1045,160 1085,172 1140,212 1165,212 1195,170 1200,130 1220,97 1262,92 1267,75 1330,90 1385,92 1400,130 1430,145 1475,190 1480,225 1525,290 1525,315 1568,355 F 70,395 110,425 112,460 120,470 120,500 150,540',
  'F 150,600 200,605 250,625 270,640 340,650 385,678 390,662 415,662',
];

const route = pts(`A 778,935 915,930 950,955 1000,958 1040,985 1075,1000 1150,992 1190,1008 1250,1010 1310,995 1400,1010 1490,1035 1568,1035
 B 22,1033 40,1090 80,1140 110,1165 150,1220 200,1270 240,1280 275,1272 320,1210 350,1210 420,1225 445,1210 495,1240 590,1222 640,1228 702,1222 725,1295 760,1320 835,1405 870,1398 935,1420 1045,1418 1160,1445 1240,1452 1290,1445 1330,1472 1385,1480 1435,1475 1530,1515
 C 0,1505 30,1515 75,1505 130,1545 F 130,35 180,50 240,145 330,115 490,103 570,90 640,92`);

type Label = [string, number, number];
const states: Label[] = [
  ['CALIFORNIA', 1290, 184], ['UTAH', 1693, 34], ['COLORADO', 1943, 57], ['ARIZONA', 1673, 306],
  ['NEW MEXICO', 1909, 317], ['KANSAS', 2283, 69], ['MISSOURI', 2542, 80], ['OKLAHOMA', 2314, 229],
  ['ARKANSAS', 2540, 284], ['MISSISSIPPI', 2656, 350], ['TEXAS', 2262, 458], ['LOUISIANA', 2572, 517],
  ['BAJA', 1532, 482], ['CALIFORNIA', 1491, 504], ['SONORA', 1739, 522], ['CHIHUAHUA', 1923, 565],
  ['COAHUILA', 2119, 639], ['NUEVO LEON', 2182, 714], ['TAMAULIPAS', 2233, 831], ['SINALOA', 1865, 786],
  ['DURANGO', 1988, 796], ['SAN LUIS', 2197, 921], ['POTOSI', 2208, 943], ['NAYARIT', 1985, 946],
  ['GUANAJUATO', 2123, 996], ['JALISCO', 2029, 1033], ['BAJA', 1696, 781], ['CALIFORNIA SUR', 1627, 803],
  ['YUCATAN', 2696, 1030],
];
const cities: Label[] = [
  ['Sacramento', 1204, 44], ['San Francisco', 1151, 91], ['San Jose', 1270, 138], ['Las Vegas', 1504, 182],
  ['Los Angeles', 1350, 300], ['San Diego', 1413, 373], ['Albuquerque', 1875, 243], ['Phoenix', 1658, 377],
  ['Tucson', 1766, 420], ['Ciudad Juárez', 1778, 472], ['Kansas City', 2432, 14], ['St. Louis', 2586, 41],
  ['Indianapolis', 2728, 18], ['Dallas', 2365, 370], ['Houston', 2415, 530], ['San Antonio', 2249, 548],
  ['Monterrey', 2179, 784], ['Guadalajara', 1948, 989], ['Mérida', 2688, 973], ['Mexico City', 2227, 1046],
];
const towns: Label[] = [['Memphis', 2665, 241], ['New Orleans', 2647, 558]];
const countries: Label[] = [['United States', 2082, -1], ['Mexico', 2078, 853]];

const cityDots: [number, number][] = [
  [1280, 56], [1238, 103], [1262, 128], [1569, 194], [1477, 385], [1955, 255], [1966, 440], [2505, 26],
  [2704, 53], [2711, 251], [2404, 382], [2710, 532], [2244, 752], [2105, 1001], [2732, 986],
];

const stops: [string, number, number][] = [
  ['A', 1427, 312], ['B', 1709, 345], ['C', 1759, 410], ['D', 1951, 406], ['E', 2327, 560], ['G', 2469, 542],
];

const Lines = ({ traces, ...rest }: { traces: string[] } & React.SVGProps<SVGGElement>) => (
  <g fill="none" strokeLinejoin="round" {...rest}>
    {traces.map((t) => <polyline key={t} points={pts(t)} />)}
  </g>
);

const Labels = ({ items, ...rest }: { items: Label[] } & React.SVGProps<SVGGElement>) => (
  <g stroke="#fff" strokeOpacity="0.7" strokeWidth="6" strokeLinejoin="round" paintOrder="stroke" {...rest}>
    {items.map(([name, x, y]) => <text key={`${name}${y}`} x={x} y={y}>{name}</text>)}
  </g>
);

const RoadMap = () => (
  <MapDrawing viewBox="1157 0 1585 1034" role="img" aria-label="Road map of the trip">
    <defs>
      <clipPath id="land">
        <polygon points={land} />
        {islands.map((p) => <polygon key={p} points={p} />)}
      </clipPath>
      <path id="gulf" d="M1688 611 Q1728 664 1796 774" />
    </defs>
    <rect x="1157" width="1585" height="1034" fill={WATER} />
    <g clipPath="url(#land)">
      <rect x="1157" width="1585" height="1034" fill={SAND} />
      {areas.map(([fill, t]) => <polygon key={t} fill={fill} points={pts(t)} />)}
      {blobs.map((b) => <polygon key={b.points} fill={b.fill} points={b.points} />)}
      {saltFlats.map((p) => <polygon key={p} fill="#ffffff" points={p} />)}
      {lakes.map((p) => <polygon key={p} fill={WATER} points={p} />)}
    </g>
    <Lines traces={minorRoads} stroke="#f3be55" strokeWidth="4" />
    <Lines traces={minorRoads} stroke="#fbe6b2" strokeWidth="2" />
    <Lines traces={roads} stroke="#f1b84a" strokeWidth="5" strokeLinecap="round" />
    <Lines traces={roads} stroke="#fdebbd" strokeWidth="3" strokeLinecap="round" />
    <Lines traces={stateLines} stroke="#6f7276" strokeWidth="1.6" strokeDasharray="4 4" />
    <Lines traces={countryLines} stroke="#5f6368" strokeWidth="1.6" />
    <Labels items={states} fill="#50545a" fontSize="22" fontWeight="500" letterSpacing="2" />
    <Labels items={cities} fill="#202124" fontSize="28" fontWeight="500" />
    <Labels items={towns} fill="#202124" fontSize="24" fontWeight="500" />
    <Labels items={countries} fill="#17181a" fontSize="38" fontWeight="700" />
    <g fill="#2f62c0" fontSize="23">
      <text><textPath href="#gulf">Gulf of California</textPath></text>
      <text x="2677" y="767">Gulf of</text>
      <text x="2675" y="791">Mexico</text>
    </g>
    {cityDots.map(([x, y]) => <circle key={x} cx={x} cy={y} r="5" fill="#f8f8f8" stroke="#303236" strokeWidth="2.2" />)}
    <polyline points={route} fill="none" stroke="#4a8df0" strokeOpacity="0.62" strokeWidth="13" strokeLinejoin="round" strokeLinecap="round" />
    <polyline points={route} fill="none" stroke="#6b93cc" strokeOpacity="0.8" strokeWidth="4" strokeLinejoin="round" />
    <polyline points={route} fill="none" stroke="#85ace4" strokeWidth="2" strokeLinejoin="round" />
    {stops.map(([name, x, y]) => (
      <circle key={name} cx={x} cy={y} r="5" fill="#4f95ee" stroke="#2058ad" strokeWidth="2" />
    ))}
    {stops.map(([name, x, y]) => (
      <g key={name} transform={`translate(${x} ${y})`}>
        <path d="M0 0C-2.500-2-2-8-5-14C-11-27-25-33-25-48A25 25 0 0 1 25-48C25-33 11-27 5-14C2-8 2.500-2 0 0Z" fill="#d9503f" stroke="#b03a2c" strokeWidth="1.500" />
        <text y="-36" fill="#fff" fontSize="33" textAnchor="middle">{name}</text>
      </g>
    ))}
  </MapDrawing>
);

const Pegman = () => (
  <svg width="34" height="60" viewBox="0 0 34 60" aria-hidden="true">
    <g fill="#f4bd4b" stroke="#7a7363" strokeWidth="1.500" strokeLinejoin="round">
      <path d="M8 21H26C28 21 28.500 22 29 24L33 41L28 43L25.500 35V59.500H18L17 43L16 59.500H8.500V35L6 43L1 41L5 24C5.500 22 6 21 8 21Z" />
      <circle cx="17" cy="10.500" r="10" />
    </g>
    <path d="M10 21.500H24L17 32Z" fill="#d78440" />
  </svg>
);

const ZoomGlyph = ({ plus }: { plus?: boolean }) => (
  <svg width="36" height="36" viewBox="0 0 36 36" fill="#666666" aria-hidden="true">
    <path d={plus ? 'M14 0h8v14h14v8H22v14h-8V22H0v-8h14z' : 'M0 14h36v8H0z'} />
  </svg>
);

const logo: [string, string][] = [
  ['G', '#4a86ee'], ['o', '#db4f3e'], ['o', '#f3b93f'], ['g', '#4a86ee'], ['l', '#54a85a'], ['e', '#db4f3e'],
];

export default function App() {
  return (
    <>
      <GlobalStyle />
      <Panel>
        <Itinerary>
          <LegHeader>
            <City>Los Angeles, CA</City>
            <CarIcon />
            <City>Phoenix, AZ</City>
          </LegHeader>
          <p>373 mi</p>
          <p>5 hours 43 mins</p>
          <p>What to do in Phoenix, AZ:</p>
          <Activities>
            <li>Visit the Desert Botanical Garden</li>
            <li>Explore the Musical Instrument Museum</li>
          </Activities>
          <p>Directions:</p>
          <Steps>
            {steps.map((s) => (
              <li key={s.meta}>
                <Meta>{s.meta}</Meta>
                {s.text && <p>{s.text}</p>}
                {s.notes?.map((n) => <Note key={n}>{n}</Note>)}
              </li>
            ))}
          </Steps>
        </Itinerary>
        <MapFrame aria-label="Map">
          <RoadMap />
          <LogoLink href="#google" aria-label="Google">
            {logo.map(([ch, color], i) => <Letter key={i} $color={color}>{ch}</Letter>)}
          </LogoLink>
          <Controls>
            <ControlCard>
              <ControlButton type="button" aria-label="Street View"><Pegman /></ControlButton>
            </ControlCard>
            <ControlCard>
              <ControlButton type="button" aria-label="Zoom in"><ZoomGlyph plus /></ControlButton>
              <Divider />
              <ControlButton type="button" aria-label="Zoom out"><ZoomGlyph /></ControlButton>
            </ControlCard>
          </Controls>
          <Attribution>
            <button type="button">Keyboard shortcuts</button>
            <span>Map data ©2023 Google, INEGI</span>
            <a href="#terms">Terms of Use</a>
          </Attribution>
        </MapFrame>
      </Panel>
    </>
  );
}
